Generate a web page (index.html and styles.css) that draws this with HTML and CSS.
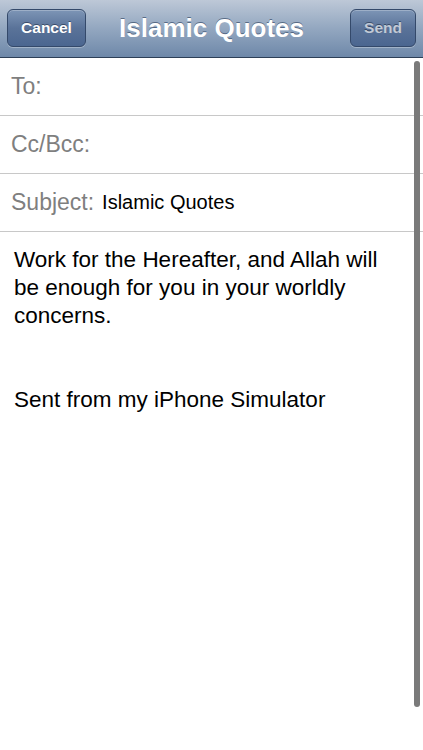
FILE: index.html
```html
<!DOCTYPE html>
<html lang="en">
<head>
    <meta charset="UTF-8">
    <meta name="viewport" content="width=device-width, initial-scale=1.0">
    <title>Islamic Quotes</title>
    <link rel="stylesheet" href="styles.css">
</head>
<body>
    <div class="screen">
        <div class="navbar">
            <button class="bar-btn cancel">Cancel</button>
            <div class="title">Islamic Quotes</div>
            <button class="bar-btn send">Send</button>
        </div>
        <div class="compose">
            <div class="field"><span class="label">To:</span></div>
            <div class="field"><span class="label">Cc/Bcc:</span></div>
            <div class="field"><span class="label">Subject:</span><span class="value">Islamic Quotes</span></div>
            <div class="body-text">
                <p>Work for the Hereafter, and Allah will be enough for you in your worldly concerns.</p>
                <p class="signature">Sent from my iPhone Simulator</p>
            </div>
            <div class="scrollbar"></div>
        </div>
    </div>
</body>
</html>
```

FILE: styles.css
```css
body {
    margin: 0;
    font-family: "Liberation Sans", Arial, sans-serif;
    background-color: #ffffff;
}

.screen {
    width: 423px;
    height: 750px;
    display: flex;
    flex-direction: column;
    overflow: hidden;
}

.navbar {
    height: 58px;
    display: flex;
    align-items: center;
    justify-content: space-between;
    padding: 0 7px 1px 7px;
    box-sizing: border-box;
    background: linear-gradient(to bottom, #bdc8d7 0%, #93a7c0 50%, #6e88a9 100%);
    border-bottom: 1px solid #2d3f57;
    position: relative;
}

.title {
    position: absolute;
    left: 0;
    right: 0;
    text-align: center;
    color: #ffffff;
    font-size: 26px;
    font-weight: bold;
    text-shadow: 0 -1px 0 rgba(40, 60, 90, 0.6);
    pointer-events: none;
}

.bar-btn {
    height: 38px;
    border: 1px solid #34496a;
    border-radius: 6px;
    background: linear-gradient(to bottom, #7d95b6 0%, #5a7399 50%, #4b6690 100%);
    box-shadow: inset 0 1px 0 rgba(255, 255, 255, 0.25), 0 1px 0 rgba(255, 255, 255, 0.3);
    font-family: "Liberation Sans", Arial, sans-serif;
    font-size: 15.5px;
    font-weight: bold;
    padding: 0;
    text-shadow: 0 -1px 0 rgba(30, 45, 70, 0.6);
}

.cancel {
    width: 79px;
    color: #ffffff;
}

.send {
    width: 66px;
    color: #c2cad6;
}

.compose {
    flex: 1;
    position: relative;
}

.field {
    height: 58px;
    display: flex;
    align-items: center;
    padding-left: 11px;
    border-bottom: 1px solid #c8c8c8;
    box-sizing: border-box;
}

.label {
    font-size: 23px;
    color: #7f7f7f;
}

.value {
    font-size: 20px;
    color: #000000;
    margin-left: 8px;
}

.body-text {
    padding: 14px 30px 0 14px;
    font-size: 22.5px;
    line-height: 28px;
    color: #000000;
}

.body-text p {
    margin: 0;
}

.body-text .signature {
    margin-top: 56px;
}

.scrollbar {
    position: absolute;
    top: 3px;
    left: 414px;
    width: 6px;
    height: 646px;
    border-radius: 3px;
    background-color: #7a7a7a;
}
```
